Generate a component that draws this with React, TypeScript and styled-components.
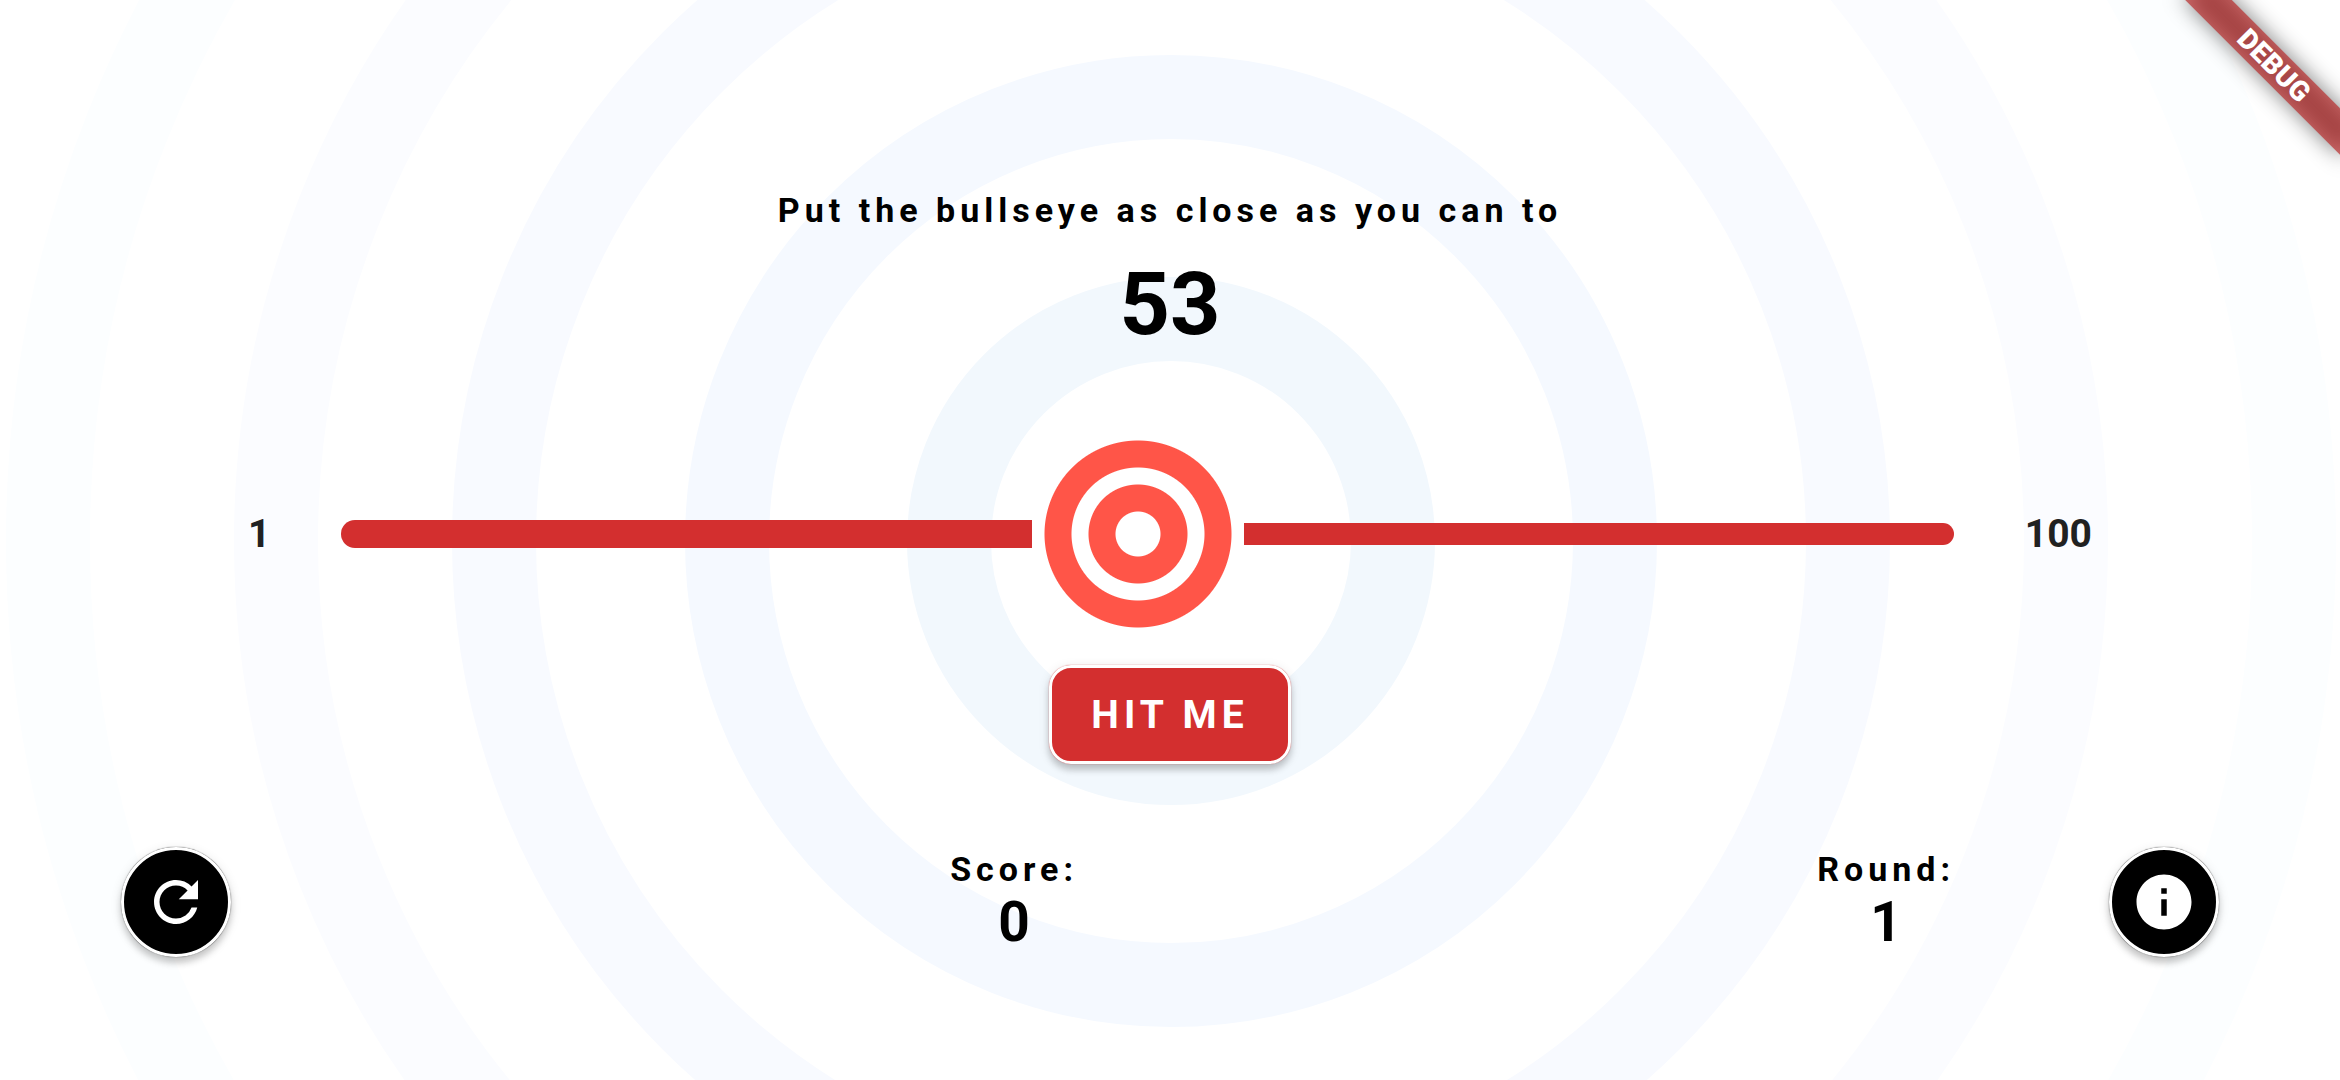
import React, { useState } from "react";
import styled, { createGlobalStyle } from "styled-components";

const RED = "#d32f2f";
const TARGET_RED = "#ff5548";

const GlobalStyle = createGlobalStyle`
  *, *::before, *::after { box-sizing: border-box; }
  body {
    margin: 0;
    background: #fff;
    font-family: Roboto, "Liberation Sans", sans-serif;
    font-weight: 700;
    color: #000;
  }
`;

const Page = styled.main`
  position: relative;
  min-height: 100vh;
  overflow: hidden;
  display: flex;
  flex-direction: column;
  padding: 190px 0 120px;
`;

const Backdrop = styled.svg`
  position: absolute;
  inset: 0;
  width: 100%;
  height: 100%;
  z-index: -1;
`;

const Heading = styled.header`
  display: flex;
  flex-direction: column;
  align-items: center;
  gap: 22px;
`;

const Caption = styled.p`
  margin: 0;
  font-size: 34px;
  line-height: 40px;
  letter-spacing: 5px;
`;

const TargetValue = styled.p`
  margin: 0;
  font-size: 88px;
  line-height: 103px;
`;

const SliderRow = styled.section`
  display: flex;
  align-items: center;
  gap: 71px;
  margin-top: 73px;
  padding: 0 248px;
`;

const Bound = styled.span`
  font-size: 39px;
  line-height: 46px;
  color: #212121;
`;

const SliderBox = styled.div`
  flex: 1;
  display: grid;
  align-items: center;
  & > * { grid-area: 1 / 1; }
`;

const Track = styled.div`
  display: flex;
  align-items: center;
`;

const Filled = styled.div`
  height: 28px;
  border-radius: 14px 0 0 14px;
  background: ${RED};
`;

const Remaining = styled.div`
  flex: 1;
  height: 22px;
  border-radius: 0 11px 11px 0;
  background: ${RED};
`;

const Range = styled.input`
  appearance: none;
  width: 100%;
  height: 212px;
  margin: 0;
  background: transparent;
  cursor: pointer;

  &::-webkit-slider-thumb {
    appearance: none;
    width: 212px;
    height: 212px;
    border: 0;
    border-radius: 0;
    background: radial-gradient(
      circle,
      #fff 22px, ${TARGET_RED} 23px,
      ${TARGET_RED} 49px, #fff 50px,
      #fff 66px, ${TARGET_RED} 67px,
      ${TARGET_RED} 93px, #fff 94px
    );
  }
`;

const HitButton = styled.button`
  align-self: center;
  margin-top: 25px;
  height: 99px;
  padding: 0 39px;
  border: 3px solid #fff;
  border-radius: 22px;
  background: ${RED};
  box-shadow: 0 0 1px ${RED}, 0 6px 6px rgba(0, 0, 0, 0.16), 0 3px 12px rgba(0, 0, 0, 0.12);
  color: #fff;
  font: inherit;
  font-size: 39px;
  line-height: 46px;
  letter-spacing: 5px;
  cursor: pointer;
`;

const Footer = styled.footer`
  display: grid;
  grid-template-columns: auto 36fr auto 37fr auto 154px auto;
  align-items: center;
  margin-top: 83px;
  padding: 0 121px;
`;

const RoundButton = styled.button<{ $column: number }>`
  grid-column: ${(p) => p.$column};
  display: grid;
  place-items: center;
  width: 110px;
  height: 110px;
  padding: 0;
  border: 3px solid #fff;
  border-radius: 50%;
  background: #000;
  box-shadow: 0 0 1px #000, 0 6px 6px rgba(0, 0, 0, 0.16), 0 3px 12px rgba(0, 0, 0, 0.12);
  color: #fff;
  cursor: pointer;
`;

const Icon = styled.svg`
  width: 66px;
  height: 66px;
  fill: currentColor;
`;

const Stat = styled.div<{ $column: number }>`
  grid-column: ${(p) => p.$column};
  display: flex;
  flex-direction: column;
  align-items: center;
`;

const StatValue = styled.span`
  font-size: 55px;
  line-height: 66px;
`;

const Corner = styled.aside`
  position: absolute;
  top: 0;
  right: 0;
  width: 220px;
  height: 220px;
  overflow: hidden;
  pointer-events: none;
`;

const Banner = styled.div`
  position: absolute;
  top: 49px;
  right: -54px;
  width: 240px;
  height: 33px;
  transform: rotate(45deg);
  color: #fff;
  font-size: 28px;
  font-weight: 900;
  line-height: 33px;
  text-align: center;

  &::before {
    content: "";
    position: absolute;
    inset: 0 10px;
    z-index: -2;
    background: rgba(0, 0, 0, 0.5);
    filter: blur(11px);
  }

  &::after {
    content: "";
    position: absolute;
    inset: 0;
    z-index: -1;
    background: rgba(183, 28, 28, 0.63);
  }
`;

const rings = [
  { radius: 1123, color: "#fcfeff" },
  { radius: 895, color: "#fbfcff" },
  { radius: 677, color: "#f8faff" },
  { radius: 444, color: "#f5f9ff" },
  { radius: 222, color: "#f2f8fd" },
];

export default function App() {
  const [position, setPosition] = useState(49.8);
  const [score, setScore] = useState(0);
  const [round, setRound] = useState(1);
  const target = 53;

  const hit = () => {
    setScore(score + 100 - Math.abs(target - Math.round(position)));
    setRound(round + 1);
  };

  const restart = () => {
    setPosition(49.8);
    setScore(0);
    setRound(1);
  };

  return (
    <Page>
      <GlobalStyle />
      <Backdrop viewBox="0 0 2340 1080" preserveAspectRatio="xMidYMid slice" aria-hidden="true">
        {rings.map((ring) => (
          <circle key={ring.radius} cx="1171" cy="541" r={ring.radius} fill="none" stroke={ring.color} strokeWidth="84" />
        ))}
      </Backdrop>

      <Heading>
        <Caption>Put the bullseye as close as you can to</Caption>
        <TargetValue>{target}</TargetValue>
      </Heading>

      <SliderRow>
        <Bound>1</Bound>
        <SliderBox>
          <Track>
            <Filled style={{ width: `${((position - 1) / 99) * 100}%` }} />
            <Remaining />
          </Track>
          <Range
            type="range"
            aria-label="Bullseye position"
            min={1}
            max={100}
            step="any"
            value={position}
            onChange={(e) => setPosition(Number(e.target.value))}
          />
        </SliderBox>
        <Bound>100</Bound>
      </SliderRow>

      <HitButton type="button" onClick={hit}>HIT ME</HitButton>

      <Footer>
        <RoundButton $column={1} type="button" aria-label="Start over" onClick={restart}>
          <Icon viewBox="0 0 24 24">
            <path d="M17.65 6.35A7.958 7.958 0 0 0 12 4c-4.42 0-7.99 3.58-7.99 8s3.57 8 7.99 8c3.73 0 6.84-2.55 7.73-6h-2.08A5.99 5.99 0 0 1 12 18c-3.31 0-6-2.69-6-6s2.69-6 6-6c1.66 0 3.14.69 4.22 1.78L13 11h7V4l-2.35 2.35z" />
          </Icon>
        </RoundButton>
        <Stat $column={3}>
          <Caption>Score:</Caption>
          <StatValue>{score}</StatValue>
        </Stat>
        <Stat $column={5}>
          <Caption>Round:</Caption>
          <StatValue>{round}</StatValue>
        </Stat>
        <RoundButton $column={7} type="button" aria-label="About the game">
          <Icon viewBox="0 0 24 24">
            <path d="M12 2C6.48 2 2 6.48 2 12s4.48 10 10 10 10-4.48 10-10S17.52 2 12 2zm1 15h-2v-6h2v6zm0-8h-2V7h2v2z" />
          </Icon>
        </RoundButton>
      </Footer>

      <Corner>
        <Banner>DEBUG</Banner>
      </Corner>
    </Page>
  );
}
